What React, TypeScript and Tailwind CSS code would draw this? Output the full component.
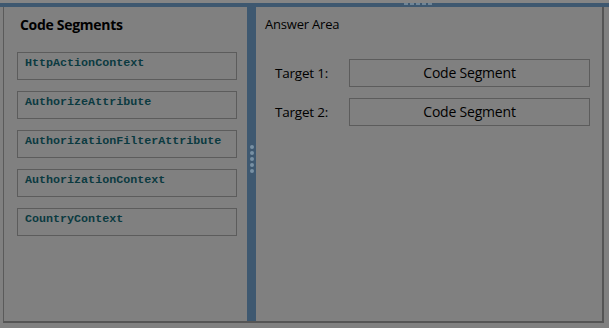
import React from "react";

const segments = [
  "HttpActionContext",
  "AuthorizeAttribute",
  "AuthorizationFilterAttribute",
  "AuthorizationContext",
  "CountryContext",
];

export default function App() {
  return (
    <div
      className="w-[609px] h-[328px] bg-[#808080] overflow-hidden flex flex-col"
      style={{ fontFamily: '"Open Sans", "Noto Sans", sans-serif' }}
    >
      <div className="h-[3px] bg-[#858585]" />
      <div className="relative h-[4px] bg-[#3e5870]">
        <div className="absolute left-[404px] top-0 flex gap-[2px]">
          {[0, 1, 2, 3, 4].map((i) => (
            <div key={i} className="w-[4px] h-[2px] bg-[#6f8597]" />
          ))}
        </div>
      </div>
      <div className="flex h-[316px] pl-[3px]">
        <div className="flex w-[601px] border-l border-r-2 border-b-2 border-l-[#5a5a5a] border-r-[#555555] border-b-[#555555]">
          <div className="w-[243px] flex flex-col pl-[13px] pt-[8px]">
            <div className="text-[14px] font-bold text-black leading-[20px] pl-[3px] tracking-[-0.3px]">
              Code Segments
            </div>
            <div className="flex flex-col gap-[11px] mt-[17px]">
              {segments.map((s) => (
                <div
                  key={s}
                  className="w-[220px] h-[28px] border border-[#5c5c5c] flex items-center pl-[7px] pb-[4px]"
                >
                  <span
                    className="text-[11.7px] text-[#0b3a40] font-semibold"
                    style={{ fontFamily: '"Liberation Mono", "DejaVu Sans Mono", monospace' }}
                  >
                    {s}
                  </span>
                </div>
              ))}
            </div>
          </div>
          <div className="w-[9px] bg-[#3e5870] flex flex-col items-center justify-center gap-[2px] pb-[10px]">
            {[0, 1, 2, 3, 4].map((i) => (
              <div key={i} className="w-[4px] h-[4px] rounded-full bg-[#7890a3]" />
            ))}
          </div>
          <div className="flex-1 flex flex-col pl-[9px] pt-[7px]">
            <div className="text-[13px] text-black leading-[20px] tracking-[-0.2px]">Answer Area</div>
            <div className="flex flex-col gap-[11px] mt-[25px] pl-[10px]">
              {["Target 1:", "Target 2:"].map((t) => (
                <div key={t} className="flex items-center">
                  <div className="w-[74px] text-[13.5px] text-black tracking-[-0.2px]">{t}</div>
                  <div className="w-[241px] h-[28px] border border-[#5c5c5c] flex items-center justify-center pb-[2px]">
                    <span className="text-[14px] text-black tracking-[-0.2px]">Code Segment</span>
                  </div>
                </div>
              ))}
            </div>
          </div>
        </div>
      </div>
    </div>
  );
}
